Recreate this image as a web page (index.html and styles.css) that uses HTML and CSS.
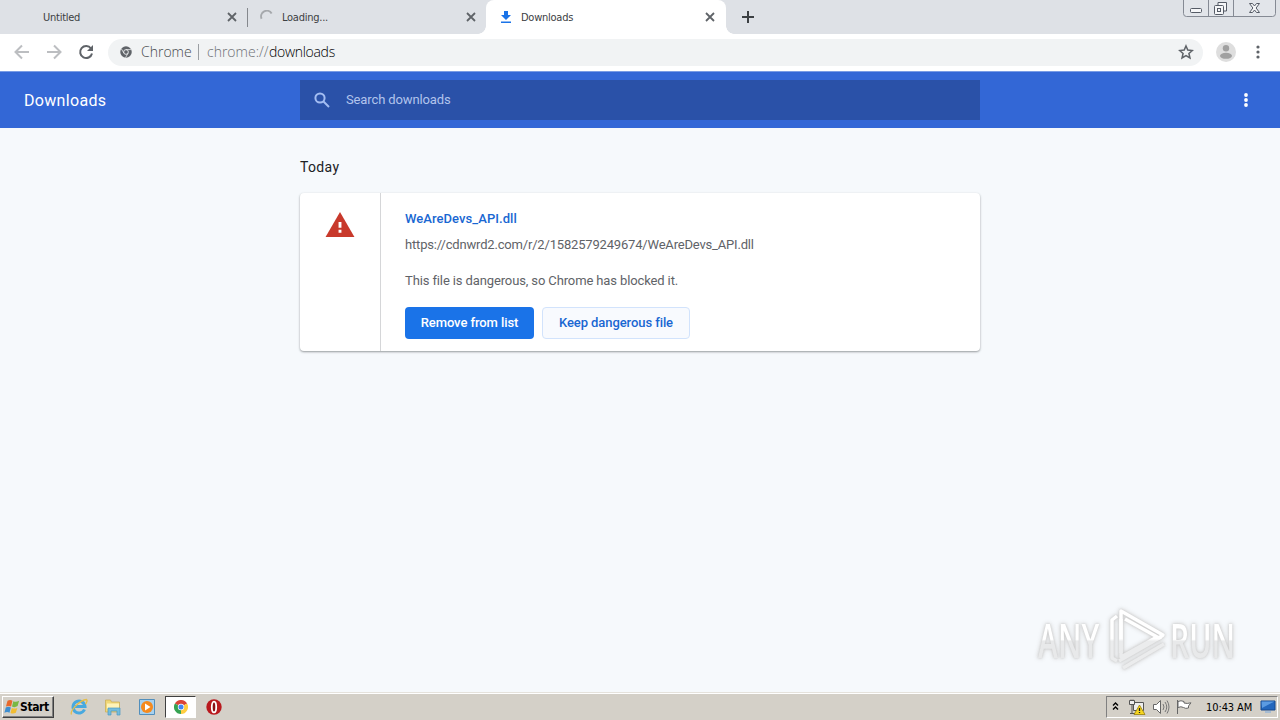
FILE: index.html
```html
<!DOCTYPE html>
<html lang="en">
<head>
<meta charset="utf-8">
<title>Downloads</title>
<link rel="stylesheet" href="styles.css">
</head>
<body>
<div class="screen">
  <div class="tabstrip">
    <div class="tab tab-first"><span class="tab-title">Untitled</span><svg class="close" viewBox="0 0 10 10"><path d="M1 1l8 8M9 1l-8 8"/></svg></div>
    <div class="tab tab-loading"><svg class="spinner" viewBox="0 0 16 16"><path d="M1.800 10A6.500 6.500 0 0 1 13.300 4"/></svg><span class="tab-title">Loading...</span><svg class="close" viewBox="0 0 10 10"><path d="M1 1l8 8M9 1l-8 8"/></svg></div>
    <div class="tab tab-active"><svg class="dl" viewBox="0 0 12 12"><path d="M4 0h4v4h3L6 9 1 4h3zM1 10.500h10V12H1z"/></svg><span class="tab-title">Downloads</span><svg class="close" viewBox="0 0 10 10"><path d="M1 1l8 8M9 1l-8 8"/></svg></div>
    <svg class="plus" viewBox="0 0 12 12"><path d="M6 0v12M0 6h12"/></svg>
    <svg class="winctl" viewBox="0 0 94 18">
      <path class="frame" d="M.5 0v13.500q0 3 3 3h86q3 0 3-3V0M25.500 0v16.500M50.500 0v16.500"/>
      <rect class="glyph" x="7.500" y="8.500" width="11" height="4" rx="1"/>
      <path class="glyph" d="M35 5.500V2.500h8.500v8.500h-3"/><rect class="glyph" x="31.500" y="5.500" width="9" height="9" rx="1"/><rect class="glyph" x="34.500" y="8.500" width="3" height="3"/>
      <path class="glyph" d="M66.500 3.500h3l2 2.500 2-2.500h3l-3.400 4.500 3.400 4.500h-3l-2-2.500-2 2.500h-3l3.400-4.500z"/>
    </svg>
  </div>
  <div class="toolbar">
    <svg class="nav faded" viewBox="0 0 16 16"><path d="M15 8H2M8 1.500L1.500 8 8 14.500"/></svg>
    <svg class="nav faded" viewBox="0 0 16 16"><path d="M1 8h13M8 1.500L14.500 8 8 14.500"/></svg>
    <svg class="nav" viewBox="0 0 16 16"><path d="M13 4.500A6 6 0 1 0 14 9.500"/><path class="solid" d="M15 1v6H9z"/></svg>
    <div class="omnibox">
      <svg class="chrome-mono" viewBox="0 0 24 24"><circle cx="12" cy="12" r="11.500" fill="#5f6368"/><circle cx="12" cy="12" r="4.700" fill="none" stroke="#f1f3f4" stroke-width="1.800"/><path d="M12 7.200h10.500M7.900 14.400L2.600 5.500M16.100 14.400L11 23.300" stroke="#f1f3f4" stroke-width="1.500"/></svg>
      <span class="origin">Chrome</span><span class="divider"></span><span class="scheme">chrome://</span><span class="host">downloads</span>
      <svg class="star" viewBox="0 0 24 24"><path d="M12 3l2.700 6.200 6.800.6-5.100 4.500 1.500 6.600-5.900-3.500-5.900 3.500 1.500-6.600-5.100-4.500 6.800-.6z"/></svg>
    </div>
    <svg class="avatar" viewBox="0 0 20 20"><circle cx="10" cy="10" r="10" fill="#dedede"/><circle cx="10" cy="6.200" r="3.200" fill="#a0a0a0"/><ellipse cx="10" cy="13.800" rx="6" ry="3" fill="#a0a0a0"/></svg>
    <svg class="dots" viewBox="0 0 4 14"><circle cx="2" cy="2" r="1.600"/><circle cx="2" cy="7" r="1.600"/><circle cx="2" cy="12" r="1.600"/></svg>
  </div>
  <header class="header">
    <h1>Downloads</h1>
    <div class="search"><svg viewBox="0 0 16 16"><circle cx="6" cy="6" r="4.600"/><path d="M9.500 9.500l5.500 5.500"/></svg><span>Search downloads</span></div>
    <svg class="menu" viewBox="0 0 4 14"><circle cx="2" cy="2" r="1.900"/><circle cx="2" cy="7" r="1.900"/><circle cx="2" cy="12" r="1.900"/></svg>
  </header>
  <main class="content">
    <h2>Today</h2>
    <section class="card">
      <div class="card-icon"><svg viewBox="0 0 30 26"><path d="M15 0l15 26H0z" fill="#c8392b"/><path d="M13.500 10.500h3v6h-3zM13.500 18.500h3v3h-3z" fill="#fff"/></svg></div>
      <div class="card-body">
        <div class="name">WeAreDevs_API.dll</div>
        <div class="url">https://cdnwrd2.com/r/2/1582579249674/WeAreDevs_API.dll</div>
        <div class="desc">This file is dangerous, so Chrome has blocked it.</div>
        <div class="actions"><button class="primary"><span>Remove from list</span></button><button class="secondary"><span>Keep dangerous file</span></button></div>
      </div>
    </section>
    <div class="watermark">
      <span class="wm-word wm-any">ANY</span>
      <svg viewBox="0 0 62 66"><defs><linearGradient id="fade" gradientUnits="userSpaceOnUse" x1="0" y1="0" x2="0" y2="66"><stop offset=".48" stop-color="#fff"/><stop offset=".52" stop-color="#ebeced"/></linearGradient></defs><g stroke="url(#fade)"><path d="M10 9L5 13v38l5 3M14 46V4l42 24-4 3-34-19"/><path d="M12 54l42-24M16 61l41-24"/><path d="M14 12v38l36-20"/></g></svg>
      <span class="wm-word wm-run">RUN</span>
    </div>
  </main>
  <footer class="taskbar">
    <div class="start"><svg viewBox="0 0 18 16"><path d="M4 1q3-2 5.500 0L8 7.500q-3-1.500-5.800 0z" fill="#e8692c"/><path d="M10.500 1.500q3 1.500 6.500-.5l-1.700 6q-3.300 2-6.300.5z" fill="#79b843"/><path d="M2 8.500q3-1.500 5.700 0L6.200 14.500q-2.500-1.500-5.700 0z" fill="#3e8ed0"/><path d="M8.800 9q3 1.500 6.200 0l-1.700 5.500q-3 1.500-6 .2z" fill="#f2bd32"/></svg><span>Start</span></div>
    <svg class="ie" viewBox="0 0 18 18"><path d="M14.500 11.500A6 6 0 1 1 15 8.500H5" fill="none" stroke="#48a9df" stroke-width="3"/><path d="M1.500 16.500C-.5 13 10 2 16.500 1.500q1.500 1-1 4.500" fill="none" stroke="#e5bd48" stroke-width="1.300"/></svg>
    <svg class="folder" viewBox="0 0 18 18"><path d="M1.500 2h5l1 2h8v10h-14z" fill="#f0d778" stroke="#c9aa50" stroke-width=".7"/><path d="M3 5.500h12V11H3z" fill="#fff3b8"/><path d="M4 17v-7h12v7h-3v-4H7v4z" fill="#74bddd" stroke="#4b9ac2" stroke-width=".7"/></svg>
    <svg class="media" viewBox="0 0 18 18"><path d="M1.500 1.500h15v15h-15z" fill="#a7d1ef" stroke="#528fbc"/><circle cx="9" cy="9" r="6" fill="#f58a1e"/><path d="M7 5.500l5.500 3.500L7 12.500z" fill="#fff"/></svg>
    <div class="running"><svg viewBox="0 0 24 24"><path d="M12 12L1.600 6A12 12 0 0 1 22.400 6z" fill="#db4437"/><path d="M12 12L1.600 6A12 12 0 0 0 12 24z" fill="#36a352"/><path d="M12 12l10.400-6A12 12 0 0 1 12 24z" fill="#ffcd40"/><circle cx="12" cy="12" r="5.500" fill="#fff"/><circle cx="12" cy="12" r="4.300" fill="#4285f4"/></svg></div>
    <svg class="opera" viewBox="0 0 16 16"><circle cx="8" cy="8" r="7.700" fill="#b9191e"/><ellipse cx="8" cy="8" rx="2.200" ry="5.400" fill="#891014" stroke="#fff" stroke-width="1.800"/></svg>
    <div class="tray">
      <svg class="chev" viewBox="0 0 7 8"><path d="M1 3.500L3.500 1 6 3.500M1 7.500L3.500 5 6 7.500"/></svg>
      <svg class="net" viewBox="0 0 18 16"><path d="M5.500 3.500h10v8h-10z" fill="#eee" stroke="#555"/><path d="M1.500 1.500h5v4h-5zM4 5.500v9M2 14.500h5M3 1.500v-1M5 1.500v-1" fill="#eee" stroke="#555"/><path d="M11.500 6l5.500 9.500H6z" fill="#f6d51f" stroke="#8d7300" stroke-width=".7"/><path d="M11.500 9v3M11.500 13v1" stroke="#222" stroke-width="1.300"/></svg>
      <svg class="sound" viewBox="0 0 18 16"><path d="M1.500 5.500h3l4-4v13l-4-4h-3z" fill="#fff" stroke="#666"/><path d="M11 5q2 3 0 6M13 3q3.500 5 0 10M15 1.500q4 6.500 0 13" fill="none" stroke="#777"/></svg>
      <svg class="flag" viewBox="0 0 18 16"><path d="M2.500 1v14M3 2.500q3-1.500 6 0v1.500q3 1 7-.2l-2.500 3.200 0 2q-3 1-5-.5-2.500-1.500-5.500 0z" fill="#fff" stroke="#666"/></svg>
      <span class="clock">10:43 AM</span>
      <svg class="desk" viewBox="0 0 16 14"><path d="M1 1h14v9H1z" fill="#2467bd" stroke="#17488d"/><path d="M1.500 1.500h13L2 8z" fill="#5c9be2"/><path d="M5 11h6v2H5z" fill="#a6bcd3"/></svg>
    </div>
  </footer>
</div>
</body>
</html>
```
FILE: styles.css
```css
* { box-sizing: border-box; }
body { margin: 0; background: #f6f9fc; font-family: Roboto, sans-serif; }
svg { display: block; flex: none; }
.screen { width: 1280px; height: 720px; overflow: hidden; display: flex; flex-direction: column; white-space: nowrap; }
.tabstrip { height: 34px; flex: none; display: flex; background: #dee1e6; }
.tab { display: flex; align-items: center; height: 34px; font: 11px "DejaVu Sans Condensed", "DejaVu Sans", sans-serif; font-stretch: condensed; color: #3c4043; position: relative; }
.tab-title { letter-spacing: -.25px; }
.tab-first { width: 248px; padding: 0 11px 0 43px; }
.tab-first::after { content: ""; position: absolute; right: 0; top: 8px; width: 1px; height: 19px; background: #85888d; }
.tab-loading { width: 238px; padding: 0 10px 0 12px; }
.tab-active { width: 240px; padding: 0 11px 0 14px; background: #fff; border-radius: 8px 8px 0 0; }
.tab-active::before, .tab-active::after { content: ""; position: absolute; bottom: 0; width: 8px; height: 8px; }
.tab-active::before { left: -8px; background: radial-gradient(circle at 0 0, transparent 7.5px, #fff 8px); }
.tab-active::after { right: -8px; background: radial-gradient(circle at 100% 0, transparent 7.5px, #fff 8px); }
.close { width: 10px; height: 10px; margin-left: auto; fill: none; stroke: #5f6368; stroke-width: 1.8; }
.spinner { width: 14px; height: 14px; margin-right: 8px; fill: none; stroke: #a5a8ac; stroke-width: 2.2; }
.dl { width: 12px; height: 12px; margin-right: 9px; fill: #1a73e8; }
.plus { width: 12px; height: 12px; margin: 11px 0 0 16px; fill: none; stroke: #3c4043; stroke-width: 2; }
.winctl { width: 94px; height: 18px; margin-left: auto; margin-right: 3px; fill: none; }
.frame { stroke: #858a94; fill: #e2e5ea; }
.glyph { stroke: #555b66; fill: #f5f6f8; }
.toolbar { height: 37px; flex: none; display: flex; align-items: center; background: #fff; padding: 0 20px 1px 14px; }
.nav { width: 16px; height: 16px; margin-right: 16px; fill: none; stroke: #5f6368; stroke-width: 2; }
.faded { stroke: #bcbec1; }
.nav .solid { fill: #5f6368; stroke: none; }
.omnibox { width: 1095px; height: 27px; margin-left: -2px; padding: 0 9px 0 12px; display: flex; align-items: center; background: #f1f3f4; border-radius: 14px; font: 300 14px "Open Sans", sans-serif; color: #5f6368; }
.chrome-mono { width: 12px; height: 12px; margin-right: 9px; }
.origin, .scheme, .host { padding-bottom: 2px; }
.origin { width: 49px; color: #45494d; }
.divider { width: 1px; height: 16px; background: #9b9fa3; margin: 0 8px; }
.scheme { width: 62px; color: #6d7175; }
.host { color: #000; letter-spacing: -.3px; }
.star { width: 16px; height: 16px; margin-left: auto; fill: none; stroke: #5f6368; stroke-width: 2.3; }
.avatar { width: 20px; height: 20px; margin-left: 13px; }
.dots { width: 4px; height: 14px; margin-left: auto; fill: #5f6368; }
.header { height: 57px; flex: none; display: flex; align-items: center; background: #3367d6; border-top: 1px solid #799ce5; padding-right: 32px; }
.header h1 { width: 300px; margin: 0; padding-left: 24px; font-size: 16px; font-weight: 400; letter-spacing: .32px; color: #fff; }
.search { width: 680px; height: 40px; background: #2a51a8; color: #b2c4ec; display: flex; align-items: center; padding-left: 14px; font-size: 13px; letter-spacing: -.12px; }
.search span { padding-bottom: 2px; }
.search svg { width: 16px; height: 16px; margin-right: 16px; fill: none; stroke: #a3bdf2; stroke-width: 2; }
.menu { width: 4px; height: 14px; margin-left: auto; fill: #fff; }
.content { flex: 1; position: relative; padding: 30px 300px 0; background: #f6f9fc; }
h2 { margin: 0; height: 35px; line-height: 19px; font-size: 14px; font-weight: 400; letter-spacing: .35px; color: #202124; }
.card { width: 680px; height: 158px; display: flex; background: #fff; border-radius: 4px; box-shadow: 0 1px 2px rgba(60,64,67,.4), 0 1px 3px rgba(60,64,67,.15); }
.card-icon { width: 81px; border-right: 1px solid #d5d6d8; padding: 19px 0 0 25px; }
.card-icon svg { width: 30px; height: 25px; }
.card-body { padding: 17px 0 0 24px; font-size: 13px; color: #5f6368; }
.name { height: 26px; line-height: 17px; color: #1967d2; font-weight: 500; letter-spacing: .06px; }
.url { height: 36px; line-height: 17px; letter-spacing: -.18px; }
.desc { height: 35px; line-height: 17px; letter-spacing: -.12px; }
.actions { display: flex; gap: 8px; }
button { height: 32px; padding: 0 0 2px; border-radius: 4px; font: 500 13px Roboto, sans-serif; letter-spacing: -.08px; }
.primary { width: 129px; border: 0; background: #1a73e8; color: #fff; }
.secondary { width: 148px; border: 1px solid #d2e3fc; background: #f8fafe; color: #1967d2; }
.watermark { position: absolute; left: 1038px; top: 479px; height: 66px; display: flex; align-items: center; filter: drop-shadow(0 0 1px #ccc) drop-shadow(0 0 2px #d0d0d0); }
.wm-word { font: 600 47px/62px "Open Sans", sans-serif; color: transparent; background: linear-gradient(#fff 49%, #e8e9ea 52%); -webkit-background-clip: text; background-clip: text; transform: scaleX(.64); transform-origin: 0 50%; }
.wm-any { width: 102px; margin-right: -35px; }
.wm-run { width: 106px; }
.watermark svg { width: 62px; height: 66px; margin: 0 1px 0 2px; fill: none; stroke-width: 3.5; stroke-linejoin: round; }
.taskbar { height: 28px; flex: none; display: flex; align-items: center; background: #d4d0c8; border-top: 1px solid #e5e2dc; box-shadow: inset 0 1px #fff; padding: 1px 2px 0 2px; }
.start { width: 52px; height: 22px; display: flex; align-items: center; padding-left: 1px; border: 1px solid; border-color: #fff #404040 #404040 #fff; box-shadow: inset -1px -1px #808080; font: bold 12px "DejaVu Sans Condensed", sans-serif; color: #000; }
.start svg { width: 16px; height: 16px; }
.start span { letter-spacing: -.4px; }
.ie { width: 18px; height: 18px; margin-left: 16px; }
.folder { width: 18px; height: 18px; margin-left: 16px; }
.media { width: 18px; height: 18px; margin-left: 16px; }
.running { width: 31px; height: 22px; margin-left: 9px; display: flex; align-items: center; justify-content: center; background: #fff; border: 1px solid; border-color: #404040 #fff #fff #404040; }
.running svg { width: 14px; height: 14px; }
.opera { width: 16px; height: 16px; margin-left: 10px; }
.tray { width: 172px; height: 22px; margin-left: auto; display: flex; align-items: center; border: 1px solid; border-color: #808080 #fff #fff #808080; padding-left: 5px; }
.chev { width: 7px; height: 8px; margin-bottom: 2px; fill: none; stroke: #000; stroke-width: 1.4; }
.net { width: 18px; height: 16px; margin-left: 9px; }
.sound { width: 18px; height: 16px; margin-left: 6px; }
.flag { width: 18px; height: 16px; margin-left: 5px; }
.clock { width: 48px; margin-left: 13px; font: 11px "DejaVu Sans Condensed", sans-serif; letter-spacing: -.1px; color: #000; }
.desk { width: 16px; height: 14px; margin-left: 6px; }
```
